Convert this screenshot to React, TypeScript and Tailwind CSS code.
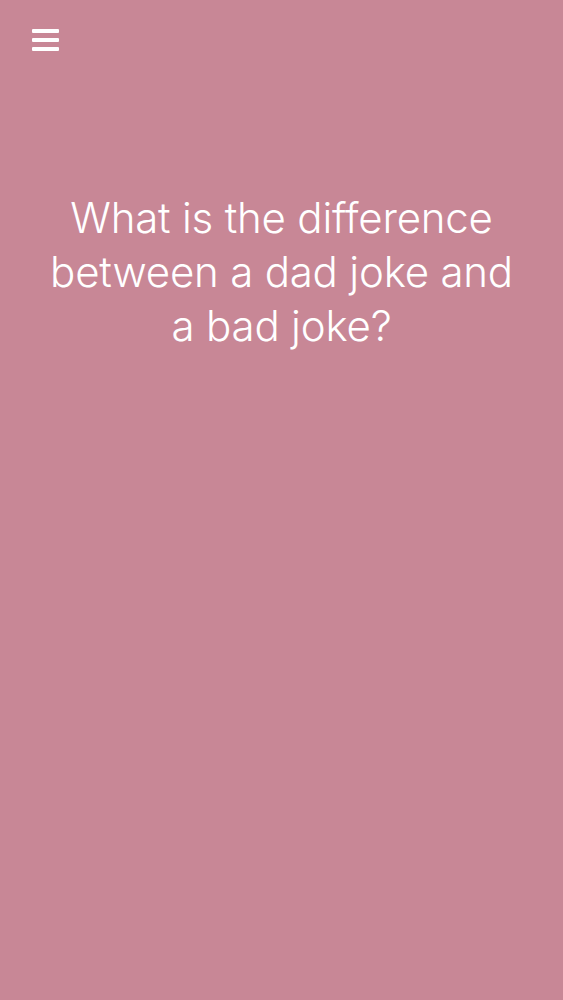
import React from 'react';

const App: React.FC = () => {
  return (
    <div className="min-h-[1000px] w-full bg-[#c88796] text-white" style={{ fontFamily: 'Inter, "Noto Sans", sans-serif' }}>
      <div className="pl-[32px] pt-[29px]">
        <button className="flex w-[27px] flex-col gap-[5px]" aria-label="Menu">
          <span className="block h-[4px] w-full rounded-[1px] bg-white" />
          <span className="block h-[4px] w-full rounded-[1px] bg-white" />
          <span className="block h-[4px] w-full rounded-[1px] bg-white" />
        </button>
      </div>
      <div className="mt-[140px] px-[50px] text-center">
        <p className="text-[42px] font-light leading-[54px] tracking-[-0.2px]">
          What is the difference between a dad joke and a bad joke?
        </p>
      </div>
    </div>
  );
};

export default App;
